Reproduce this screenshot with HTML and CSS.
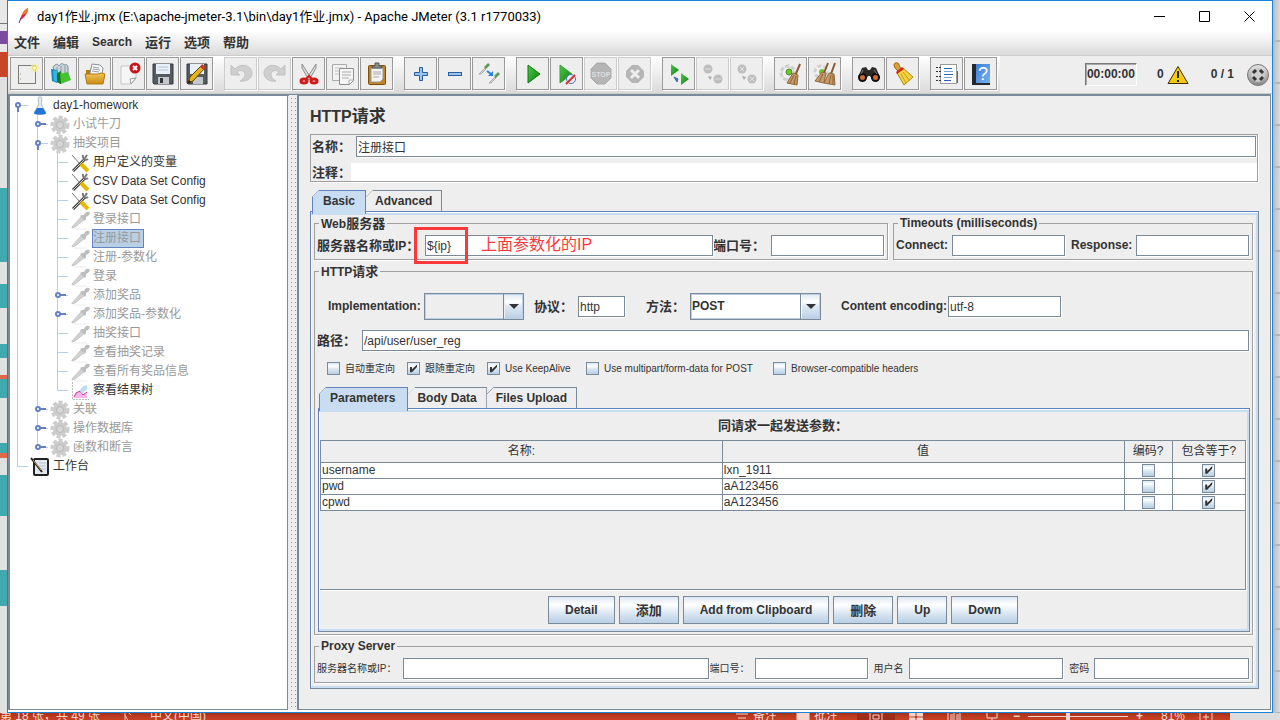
FILE: index.html
```html
<!DOCTYPE html>
<html lang="zh-CN">
    <head>
        <meta charset="UTF-8">
        <meta name="viewport" content="width=device-width, initial-scale=1.0"/>
        <title>day1作业.jmx - Apache JMeter</title>
        <link rel="stylesheet" href="styles.css">
    </head>
    <body>
        <!-- icon sprite -->
        <svg class="sprite">
            <defs>
                <linearGradient id="green" x1="0" y1="0" x2="1" y2="1">
                    <stop offset="0" stop-color="#4fc94a"/><stop offset="1" stop-color="#087d08"/>
                </linearGradient>
                <linearGradient id="gold" x1="0" y1="0" x2="0" y2="1">
                    <stop offset="0" stop-color="#f3c65c"/><stop offset="1" stop-color="#c98a12"/>
                </linearGradient>
                <linearGradient id="book" x1="0" y1="0" x2="1" y2="1">
                    <stop offset="0" stop-color="#3c7fd6"/><stop offset="1" stop-color="#7ab2f2"/>
                </linearGradient>
                <linearGradient id="steel" x1="0" y1="0" x2="0" y2="1">
                    <stop offset="0" stop-color="#e6e6e6"/><stop offset="1" stop-color="#888"/>
                </linearGradient>
            </defs>
            <symbol id="i-feather" viewBox="0 0 12 18">
                <path d="M11 1C7 3 4 8 3 13l2-1C9 9 11 5 11 1z" fill="#d6274b"/>
                <path d="M11 1C8 2 6 5 5 8l4-1c2-2 2-4 2-6z" fill="#ee7a26"/>
                <path d="M4 11l-2 5" stroke="#6b2c6b" fill="none"/>
            </symbol>
            <symbol id="i-new" viewBox="0 0 24 24">
                <rect x="3.500" y="3.500" width="17" height="18" fill="#eee" stroke="#7b7b74"/>
                <path d="M5 12h1M5 17h1" stroke="#999"/>
                <circle cx="19.500" cy="6" r="4" fill="#f6efa0" opacity=".7"/>
                <circle cx="19.500" cy="6" r="2" fill="#fffbe0" stroke="#e3d64e"/>
            </symbol>
            <symbol id="i-templates" viewBox="0 0 24 24">
                <path d="M4 5c3-4 5-3 6-1 2-3 4-3 5-1 2-1 4 0 4 2v8H6z" fill="#c9d3dc" stroke="#7e8b96"/>
                <path d="M8 5v7M12 4v8M16 4v8" stroke="#8a98a5"/>
                <path d="M2 7l6 1v13l-5-2z" fill="#1787c2"/>
                <path d="M4 9l5-1v12l-4-1z" fill="#37b4e6"/>
                <path d="M8 11l4-2v13l-4-2z" fill="#1c8a1c"/>
                <path d="M11 12l8-2 3 8-10 4z" fill="#46c332"/>
                <path d="M8 11l3 1 1 10-4-2z" fill="#177a17"/>
            </symbol>
            <symbol id="i-open" viewBox="0 0 24 24">
                <path d="M3 8h4l1-2h10l1 4v10H3z" fill="#b57a17"/>
                <path d="M7 11l2-9 8 1 3 3-1 7H7z" fill="#f7f7f7" stroke="#8d9195"/>
                <path d="M10 5l6 1M10 7l7 1M9 9l7 1" stroke="#9aa0a6"/>
                <path d="M2 12h13l3-1 4 1-2 10H4z" fill="url(#gold)" stroke="#b27a14"/>
            </symbol>
            <symbol id="i-close" viewBox="0 0 24 24">
                <path d="M4 4h15v12l-5 6H4z" fill="#f6f6f6" stroke="#c5c5c5"/>
                <path d="M19 16l-5 6-1-5z" fill="#fff" stroke="#999"/>
                <circle cx="18" cy="6" r="5.500" fill="#c5161d"/>
                <path d="M16 4l4 4M20 4l-4 4" stroke="#fff" stroke-width="2"/>
            </symbol>
            <symbol id="i-save" viewBox="0 0 24 24">
                <path d="M2 2h20v20H3l-1-1z" fill="#555b61" stroke="#33373b"/>
                <rect x="5" y="2" width="14" height="10" fill="#e9f1f8"/>
                <path d="M7 5h10M7 8h10" stroke="#b2c6d8"/>
                <rect x="7" y="15" width="11" height="7" fill="#c4c8cc"/>
                <rect x="9" y="16" width="3" height="5" fill="#33373b"/>
            </symbol>
            <symbol id="i-saveas" viewBox="0 0 24 24">
                <path d="M2 2h20v20H3l-1-1z" fill="#555b61" stroke="#33373b"/>
                <rect x="5" y="2" width="14" height="10" fill="#e9f1f8"/>
                <rect x="8" y="15" width="10" height="7" fill="#c4c8cc"/>
                <path d="M3 21l2-6L16 4l3 3L8 19z" fill="#e8b21c" stroke="#5c4306"/>
                <path d="M15 5l2-3 4 3-2 3z" fill="#c6382a"/>
                <path d="M3 21l1-3 2 2z" fill="#111"/>
            </symbol>
            <symbol id="i-undo" viewBox="0 0 24 24">
                <path d="M2 3v10h9L8 10c4-3 8-1 8 3 0 3-3 5-5 6 6 1 12-2 12-8C23 4 13 0 6 7z" fill="#cfcfcf" stroke="#c2c2c2"/>
            </symbol>
            <symbol id="i-cut" viewBox="0 0 24 24">
                <path d="M5 2l9 14-2 2L5 6zM19 2l-9 14 2 2 7-12z" fill="#dcdcdc" stroke="#8c8c8c"/>
                <ellipse cx="7" cy="19" rx="3" ry="2" fill="none" stroke="#d11a1a" stroke-width="3"/>
                <ellipse cx="17" cy="19" rx="3" ry="2" fill="none" stroke="#d11a1a" stroke-width="3"/>
                <path d="M9 17l3-3 3 3" fill="none" stroke="#d11a1a" stroke-width="2"/>
            </symbol>
            <symbol id="i-copy" viewBox="0 0 24 24">
                <path d="M1.500 2.500h14v16h-14z" fill="#f2f2f2" stroke="#aaa"/>
                <path d="M4 6h8M4 9h4M4 12h4" stroke="#c4c4c4"/>
                <path d="M8.500 6.500h14v12l-4 4h-10z" fill="#f5f5f5" stroke="#8e8e8e"/>
                <path d="M11 10h9M11 13h9M11 16h7M22 18h-4v4" stroke="#aaa" fill="none"/>
            </symbol>
            <symbol id="i-paste" viewBox="0 0 24 24">
                <rect x="3.500" y="3.500" width="17" height="19" rx="1" fill="#c28226" stroke="#7e4f0b"/>
                <path d="M6 6h12v11l-3 3H6z" fill="#f4f4f4" stroke="#999"/>
                <path d="M8 10h8M8 12h8M8 15h6" stroke="#aaa"/>
                <path d="M7 6V4h3V1h4v3h3v2z" fill="#8c8f88" stroke="#55574f"/>
            </symbol>
            <symbol id="i-plus" viewBox="0 0 24 24">
                <path d="M10.500 5.500h3v5h5v3h-5v5h-3v-5h-5v-3h5z" fill="#9cc4ea" stroke="#2a5f9e"/>
            </symbol>
            <symbol id="i-minus" viewBox="0 0 24 24">
                <rect x="5.500" y="10.500" width="13" height="3" fill="#9cc4ea" stroke="#2a5f9e"/>
            </symbol>
            <symbol id="i-toggle" viewBox="0 0 24 24">
                <path d="M2 12l6-6 1 1-5 5z" fill="#ddd" stroke="#aaa"/>
                <path d="M7 5l4-4 2 2-4 4z" fill="#5d9a5a"/>
                <path d="M10 9l4 3" stroke="#2b7fe8" stroke-width="2"/>
                <path d="M16 9v5h-5z" fill="#2b7fe8"/>
                <path d="M12 21l6-6 1 1-5 5z" fill="#ddd" stroke="#aaa"/>
                <path d="M17 14l4-4 2 2-4 4z" fill="#5d9a5a"/>
            </symbol>
            <symbol id="i-run" viewBox="0 0 24 24">
                <path d="M7 3l12 9-12 9z" fill="url(#green)" stroke="#0b7a12"/>
            </symbol>
            <symbol id="i-run-notimer" viewBox="0 0 24 24">
                <path d="M5 3l12 9-12 9z" fill="url(#green)" stroke="#3d9c3d"/>
                <circle cx="16" cy="17" r="4.500" fill="#e8eef7" stroke="#4b74b5"/>
                <path d="M11 22l9-9" stroke="#d9312b" stroke-width="2"/>
            </symbol>
            <symbol id="i-shutdown" viewBox="0 0 24 24">
                <path d="M9 3h6l6 6v6l-6 6H9l-6-6V9z" fill="#b5b5b5"/>
                <path d="M8 8l8 8M16 8l-8 8" stroke="#eee" stroke-width="3"/>
            </symbol>
            <symbol id="i-remote" viewBox="0 0 24 24">
                <path d="M4 2l8 6-8 6z" fill="url(#green)"/>
                <path d="M14 11l8 6-8 6z" fill="url(#green)"/>
                <path d="M7 15l4 2-1 3z" fill="#3f6fb5" stroke="#3f6fb5"/>
            </symbol>
            <symbol id="i-remote-stop" viewBox="0 0 24 24">
                <circle cx="7" cy="7" r="4.500" fill="#bebebe"/>
                <circle cx="17" cy="17" r="4.500" fill="#bebebe"/>
                <path d="M4 7h6M14 17h6" stroke="#ddd"/>
                <path d="M7 14l4 1-2 3z" fill="#aaa"/>
            </symbol>
            <symbol id="i-remote-shut" viewBox="0 0 24 24">
                <circle cx="7" cy="7" r="4.500" fill="#bebebe"/>
                <circle cx="17" cy="17" r="4.500" fill="#bebebe"/>
                <path d="M5 5l4 4M9 5l-4 4M15 15l4 4M19 15l-4 4" stroke="#e4e4e4"/>
                <path d="M7 14l4 1-2 3z" fill="#aaa"/>
            </symbol>
            <symbol id="i-clear" viewBox="0 0 24 24">
                <circle cx="9" cy="11" r="7" fill="#eee" stroke="#d0d0d0" stroke-width="3" stroke-dasharray="4 2"/>
                <circle cx="9" cy="11" r="6" fill="#f2f2f2" stroke="#ccc"/>
                <circle cx="10" cy="10" r="3" fill="#6fc52f" stroke="#4c8d1f"/>
                <path d="M21 2l-5 12" stroke="#8a5a32" stroke-width="2"/>
                <path d="M14 11l5 2-1 10-10-2z" fill="#c69a6a" stroke="#936638"/>
                <path d="M15 13l-4 8M17 14l-2 8" stroke="#8a6137"/>
            </symbol>
            <symbol id="i-clear-all" viewBox="0 0 24 24">
                <circle cx="8" cy="10" r="6" fill="#f2f2f2" stroke="#d0d0d0" stroke-width="3" stroke-dasharray="4 2"/>
                <circle cx="9" cy="10" r="3" fill="#6fc52f"/>
                <path d="M15 1l-4 10M22 1l-4 11" stroke="#8a5a32" stroke-width="2"/>
                <path d="M9 10l4 1-2 10-9-2zM16 11l5 1 1 11-11-2z" fill="#c69a6a" stroke="#936638"/>
                <path d="M10 12l-4 8M18 13l-2 9M20 13v9" stroke="#8a6137"/>
            </symbol>
            <symbol id="i-search" viewBox="0 0 24 24">
                <path d="M5 6l4-1 2 3h2l2-3 4 1 4 9-2 4h-5l-3-5h-2l-3 5H3l-2-4z" fill="#2c2926"/>
                <circle cx="5.500" cy="15.500" r="3.500" fill="#c76c3a" stroke="#111" stroke-width="2"/>
                <circle cx="18.500" cy="15.500" r="3.500" fill="#c76c3a" stroke="#111" stroke-width="2"/>
                <path d="M6 8l-2 4M17 8l3 4" stroke="#777"/>
            </symbol>
            <symbol id="i-broom" viewBox="0 0 24 24">
                <path d="M3 3c0-3 5-3 5 0l2 4-3 2-3-3z" fill="#dba23b" stroke="#9c6a12"/>
                <path d="M6 11l6-5 10 9-9 8z" fill="#f2d13c" stroke="#b48b12"/>
                <path d="M10 12l5 9M12 10l7 9" stroke="#c6a024"/>
                <path d="M5 10l6-5 2 2-7 5z" fill="#cf2b1d"/>
            </symbol>
            <symbol id="i-function" viewBox="0 0 24 24">
                <rect x="21" y="9" width="2" height="6" fill="#1d6fe0"/><rect x="21" y="15" width="2" height="6" fill="#2a9a2a"/>
                <rect x="5.500" y="2.500" width="16" height="19" fill="#fff" stroke="#999"/>
                <path d="M1 5.500h6M1 9.500h6M1 14.500h6M1 18.500h6" stroke="#333" stroke-dasharray="2 1"/>
                <path d="M9 6.500h8M9 12.500h9M9 18.500h7" stroke="#2a62c4"/>
                <path d="M9 9.500h9M9 15.500h8" stroke="#7da3dd"/>
            </symbol>
            <symbol id="i-warning" viewBox="0 0 22 20">
                <path d="M11 1.500L21 18.500H1z" fill="#f7ca12" stroke="#3a3000" stroke-linejoin="round"/>
                <path d="M11 6v7M11 15v2" stroke="#222" stroke-width="2"/>
            </symbol>
            <symbol id="i-status" viewBox="0 0 24 24">
                <circle cx="12" cy="12" r="10.500" fill="url(#steel)" stroke="#777"/>
                <circle cx="12" cy="12" r="7" fill="#ccc"/>
                <path d="M7 10l3-3M14 7l3 3M17 14l-3 3M10 17l-3-3" stroke="#333" stroke-width="3"/>
            </symbol>
            <symbol id="i-flask" viewBox="0 0 20 20">
                <path d="M8.500 1v8L4 17c0 2 12 2 12 0l-4.500-8V1z" fill="#e4ebf2" stroke="#b5bfca"/>
                <path d="M7 12l-3 5c0 2 12 2 12 0l-3-5z" fill="#1f75d8"/>
            </symbol>
            <symbol id="i-gear" viewBox="0 0 20 20">
                <circle cx="10" cy="10" r="8" fill="none" stroke="#ccc" stroke-width="3" stroke-dasharray="4 2"/>
                <circle cx="10" cy="10" r="5" fill="#ddd" stroke="#ccc" stroke-width="4"/>
                <circle cx="10" cy="10" r="3.500" fill="#d6d6d6" stroke="#b8b8b8"/>
            </symbol>
            <symbol id="i-pipette" viewBox="0 0 20 20">
                <path d="M2 17L12 6l3 3L5 17l-3 1z" fill="#d2d2d2" stroke="#c4c4c4"/>
                <path d="M10 6l2-1 2 0c1-3 3-4 5-3s0 4-3 5l0 2-1 2z" fill="#bdbdbd"/>
                <path d="M4 19h13" stroke="#ececec"/>
            </symbol>
            <symbol id="i-tools" viewBox="0 0 20 20">
                <path d="M2 2l8 9" stroke="#777" stroke-width="1"/>
                <path d="M3 18L15 6" stroke="#444" stroke-width="3"/>
                <path d="M3 18L15 6" stroke="#ccc" stroke-width="1"/>
                <path d="M13 2c-1 3 2 6 5 4M17 2l-2 3" stroke="#777" stroke-width="2" fill="none"/>
                <path d="M11 11l7 7" stroke="#e9b800" stroke-width="4"/>
            </symbol>
            <symbol id="i-chart" viewBox="0 0 20 20">
                <path d="M2.500 1v17.500H19" stroke="#bbb" fill="none" stroke-dasharray="2 1"/>
                <path d="M4 17l2-5 4-2 3 4 4-3v6z" fill="#f8b6ec"/>
                <path d="M4 16l2-4 4-2 3 4 4-3" stroke="#c2368f" fill="none"/>
                <path d="M10 10c1-4 3-5 7-6v5c-4 0-3 4-5 4z" fill="#bcdcf8"/>
            </symbol>
            <symbol id="i-bench" viewBox="0 0 20 20">
                <rect x="4" y="2" width="14" height="16" rx="1" fill="#e3e8ee" stroke="#222" stroke-width="2"/>
                <path d="M9 6h7M9 9h7M9 12h7" stroke="#b5c2d2"/>
                <path d="M1 1l11 14" stroke="#222" stroke-width="2"/>
                <path d="M3 3l8 10" stroke="#b8964c"/>
            </symbol>
            <symbol id="i-closed" viewBox="0 0 12 12">
                <path d="M5 5h6" stroke="#6382bf" stroke-width="2"/>
                <circle cx="3" cy="5" r="2" fill="#fff" stroke="#6382bf" stroke-width="2"/>
            </symbol>
            <symbol id="i-opened" viewBox="0 0 12 12">
                <path d="M3 6v6" stroke="#6382bf" stroke-width="2"/>
                <circle cx="3" cy="5" r="2" fill="#fff" stroke="#6382bf" stroke-width="2"/>
            </symbol>
        </svg>

        <div class="desktop">
            <div class="strip strip-left"></div>

            <div class="window">
                <header class="titlebar">
                    <svg class="app-icon"><use href="#i-feather"/></svg>
                    <span class="title">day1作业.jmx (E:\apache-jmeter-3.1\bin\day1作业.jmx) - Apache JMeter (3.1 r1770033)</span>
                    <button class="win-button" aria-label="Minimize"><svg viewBox="0 0 11 11"><path d="M0 5.500h11"/></svg></button>
                    <button class="win-button" aria-label="Maximize"><svg viewBox="0 0 11 11"><path d="M.5.5h10v10H.5z"/></svg></button>
                    <button class="win-button" aria-label="Close"><svg viewBox="0 0 11 11"><path d="M.5.5l10 10M10.500.5l-10 10"/></svg></button>
                </header>

                <nav class="menubar">
                    <button>文件</button>
                    <button>编辑</button>
                    <button class="latin">Search</button>
                    <button>运行</button>
                    <button>选项</button>
                    <button>帮助</button>
                </nav>

                <div class="toolbar">
                    <div class="tools">
                        <div class="group">
                            <button aria-label="新建"><svg><use href="#i-new"/></svg></button>
                            <button aria-label="模板"><svg><use href="#i-templates"/></svg></button>
                            <button aria-label="打开"><svg><use href="#i-open"/></svg></button>
                            <button aria-label="关闭"><svg><use href="#i-close"/></svg></button>
                            <button aria-label="保存"><svg><use href="#i-save"/></svg></button>
                            <button aria-label="另存为"><svg><use href="#i-saveas"/></svg></button>
                        </div>
                        <div class="group">
                            <button aria-label="撤销" disabled><svg><use href="#i-undo"/></svg></button>
                            <button aria-label="重做" disabled><svg class="mirrored"><use href="#i-undo"/></svg></button>
                            <button aria-label="剪切"><svg><use href="#i-cut"/></svg></button>
                            <button aria-label="复制"><svg><use href="#i-copy"/></svg></button>
                            <button aria-label="粘贴"><svg><use href="#i-paste"/></svg></button>
                        </div>
                        <div class="group">
                            <button aria-label="展开"><svg><use href="#i-plus"/></svg></button>
                            <button aria-label="折叠"><svg><use href="#i-minus"/></svg></button>
                            <button aria-label="切换"><svg><use href="#i-toggle"/></svg></button>
                        </div>
                        <div class="group">
                            <button aria-label="启动"><svg><use href="#i-run"/></svg></button>
                            <button aria-label="不停顿启动"><svg><use href="#i-run-notimer"/></svg></button>
                            <button aria-label="停止" disabled>
                                <svg viewBox="0 0 24 24">
                                    <path d="M8 1h8l6 6v9l-6 6H8l-6-6V7z" fill="#b5b5b5" stroke="#aaa"/>
                                    <text x="12" y="15" text-anchor="middle" font-size="7" font-weight="bold" fill="#dedede">STOP</text>
                                </svg>
                            </button>
                            <button aria-label="关闭线程" disabled><svg><use href="#i-shutdown"/></svg></button>
                        </div>
                        <div class="group">
                            <button aria-label="远程启动"><svg><use href="#i-remote"/></svg></button>
                            <button aria-label="远程停止" disabled><svg><use href="#i-remote-stop"/></svg></button>
                            <button aria-label="远程关闭" disabled><svg><use href="#i-remote-shut"/></svg></button>
                        </div>
                        <div class="group">
                            <button aria-label="清除"><svg><use href="#i-clear"/></svg></button>
                            <button aria-label="清除全部"><svg><use href="#i-clear-all"/></svg></button>
                        </div>
                        <div class="group">
                            <button aria-label="查找"><svg><use href="#i-search"/></svg></button>
                            <button aria-label="重置查找"><svg><use href="#i-broom"/></svg></button>
                        </div>
                        <div class="group">
                            <button aria-label="函数助手"><svg><use href="#i-function"/></svg></button>
                            <button aria-label="帮助">
                                <svg viewBox="0 0 24 24">
                                    <rect x="3" y="2" width="18" height="21" fill="#23272e"/>
                                    <rect x="7" y="2" width="14" height="19" fill="url(#book)"/>
                                    <text x="14" y="18" text-anchor="middle" font-size="18" fill="#fff">?</text>
                                </svg>
                            </button>
                        </div>
                    </div>
                    <div class="status">
                        <span class="timer">00:00:00</span>
                        <span class="errors">0</span>
                        <svg class="warning"><use href="#i-warning"/></svg>
                        <span class="threads">0 / 1</span>
                        <svg class="indicator"><use href="#i-status"/></svg>
                    </div>
                </div>

                <div class="workspace">
                    <aside class="tree">
                        <ul>
                            <li>
                                <div class="node"><button class="handle" aria-label="折叠"><svg><use href="#i-opened"/></svg></button><svg class="icon"><use href="#i-flask"/></svg><span class="name">day1-homework</span></div>
                                <ul>
                                    <li><div class="node off"><button class="handle" aria-label="展开"><svg><use href="#i-closed"/></svg></button><svg class="icon"><use href="#i-gear"/></svg><span class="name">小试牛刀</span></div></li>
                                    <li>
                                        <div class="node off"><button class="handle" aria-label="折叠"><svg><use href="#i-opened"/></svg></button><svg class="icon"><use href="#i-gear"/></svg><span class="name">抽奖项目</span></div>
                                        <ul>
                                            <li><div class="node"><span class="handle"></span><svg class="icon"><use href="#i-tools"/></svg><span class="name">用户定义的变量</span></div></li>
                                            <li><div class="node"><span class="handle"></span><svg class="icon"><use href="#i-tools"/></svg><span class="name">CSV Data Set Config</span></div></li>
                                            <li><div class="node"><span class="handle"></span><svg class="icon"><use href="#i-tools"/></svg><span class="name">CSV Data Set Config</span></div></li>
                                            <li><div class="node off"><span class="handle"></span><svg class="icon"><use href="#i-pipette"/></svg><span class="name">登录接口</span></div></li>
                                            <li><div class="node off"><span class="handle"></span><svg class="icon"><use href="#i-pipette"/></svg><span class="name selected">注册接口</span></div></li>
                                            <li><div class="node off"><span class="handle"></span><svg class="icon"><use href="#i-pipette"/></svg><span class="name">注册-参数化</span></div></li>
                                            <li><div class="node off"><span class="handle"></span><svg class="icon"><use href="#i-pipette"/></svg><span class="name">登录</span></div></li>
                                            <li><div class="node off"><button class="handle" aria-label="展开"><svg><use href="#i-closed"/></svg></button><svg class="icon"><use href="#i-pipette"/></svg><span class="name">添加奖品</span></div></li>
                                            <li><div class="node off"><button class="handle" aria-label="展开"><svg><use href="#i-closed"/></svg></button><svg class="icon"><use href="#i-pipette"/></svg><span class="name">添加奖品-参数化</span></div></li>
                                            <li><div class="node off"><span class="handle"></span><svg class="icon"><use href="#i-pipette"/></svg><span class="name">抽奖接口</span></div></li>
                                            <li><div class="node off"><span class="handle"></span><svg class="icon"><use href="#i-pipette"/></svg><span class="name">查看抽奖记录</span></div></li>
                                            <li><div class="node off"><span class="handle"></span><svg class="icon"><use href="#i-pipette"/></svg><span class="name">查看所有奖品信息</span></div></li>
                                            <li><div class="node"><span class="handle"></span><svg class="icon"><use href="#i-chart"/></svg><span class="name">察看结果树</span></div></li>
                                        </ul>
                                    </li>
                                    <li><div class="node off"><button class="handle" aria-label="展开"><svg><use href="#i-closed"/></svg></button><svg class="icon"><use href="#i-gear"/></svg><span class="name">关联</span></div></li>
                                    <li><div class="node off"><button class="handle" aria-label="展开"><svg><use href="#i-closed"/></svg></button><svg class="icon"><use href="#i-gear"/></svg><span class="name">操作数据库</span></div></li>
                                    <li><div class="node off"><button class="handle" aria-label="展开"><svg><use href="#i-closed"/></svg></button><svg class="icon"><use href="#i-gear"/></svg><span class="name">函数和断言</span></div></li>
                                </ul>
                            </li>
                            <li><div class="node"><span class="handle"></span><svg class="icon"><use href="#i-bench"/></svg><span class="name">工作台</span></div></li>
                        </ul>
                    </aside>

                    <div class="divider"></div>

                    <main class="editor">
                        <h1>HTTP<span class="cjk">请求</span></h1>

                        <div class="naming">
                            <div class="naming-row">
                                <label for="name">名称：</label>
                                <input type="text" id="name" value="注册接口">
                            </div>
                            <div class="naming-row">
                                <label for="comment">注释：</label>
                                <input type="text" id="comment" class="plain">
                            </div>
                        </div>

                        <div class="tabs">
                            <button class="tab active">Basic</button>
                            <button class="tab">Advanced</button>
                        </div>
                        <section class="panel request">
                            <div class="servers">
                                <fieldset class="web">
                                    <legend>Web<span class="cjk">服务器</span></legend>
                                    <div class="fields">
                                        <label for="server" class="server-label"><span class="cjk">服务器名称或</span>IP<span class="cjk">：</span></label>
                                        <div class="server-field">
                                            <input type="text" id="server" value="${ip}">
                                            <span class="mark"></span>
                                            <span class="note">上面参数化的IP</span>
                                        </div>
                                        <label for="port" class="port-label cjk">端口号：</label>
                                        <input type="text" id="port" class="short">
                                    </div>
                                </fieldset>
                                <fieldset class="timeouts">
                                    <legend>Timeouts (milliseconds)</legend>
                                    <div class="fields">
                                        <label for="connect">Connect:</label>
                                        <input type="text" id="connect" class="short">
                                        <label for="response">Response:</label>
                                        <input type="text" id="response" class="short">
                                    </div>
                                </fieldset>
                            </div>

                            <fieldset class="http">
                                <legend>HTTP<span class="cjk">请求</span></legend>
                                <div class="options">
                                    <label for="implementation" class="implementation-label">Implementation:</label>
                                    <span class="combo implementation"><select id="implementation"><option></option></select></span>
                                    <label for="protocol" class="protocol-label cjk">协议：</label>
                                    <input type="text" id="protocol" class="protocol" value="http">
                                    <label for="method" class="method-label cjk">方法：</label>
                                    <span class="combo method"><select id="method"><option>POST</option><option>GET</option></select></span>
                                    <label for="encoding" class="encoding-label">Content encoding:</label>
                                    <input type="text" id="encoding" class="short" value="utf-8">
                                </div>
                                <div class="fields path">
                                    <label for="path" class="cjk">路径：</label>
                                    <input type="text" id="path" value="/api/user/user_reg">
                                </div>
                                <div class="checks">
                                    <label><input type="checkbox">自动重定向</label>
                                    <label><input type="checkbox" checked>跟随重定向</label>
                                    <label><input type="checkbox" checked>Use KeepAlive</label>
                                    <label><input type="checkbox">Use multipart/form-data for POST</label>
                                    <label><input type="checkbox">Browser-compatible headers</label>
                                </div>

                                <div class="tabs">
                                    <button class="tab active">Parameters</button>
                                    <button class="tab">Body Data</button>
                                    <button class="tab">Files Upload</button>
                                </div>
                                <section class="panel parameters">
                                    <h2>同请求一起发送参数：</h2>
                                    <div class="scroll">
                                        <table>
                                            <thead>
                                                <tr><th>名称:</th><th>值</th><th class="encode">编码?</th><th class="equals">包含等于?</th></tr>
                                            </thead>
                                            <tbody>
                                                <tr><td>username</td><td>lxn_1911</td><td><input type="checkbox" aria-label="编码"></td><td><input type="checkbox" aria-label="包含等于" checked></td></tr>
                                                <tr><td>pwd</td><td>aA123456</td><td><input type="checkbox" aria-label="编码"></td><td><input type="checkbox" aria-label="包含等于" checked></td></tr>
                                                <tr><td>cpwd</td><td>aA123456</td><td><input type="checkbox" aria-label="编码"></td><td><input type="checkbox" aria-label="包含等于" checked></td></tr>
                                            </tbody>
                                        </table>
                                    </div>
                                    <div class="actions">
                                        <button>Detail</button>
                                        <button class="cjk">添加</button>
                                        <button>Add from Clipboard</button>
                                        <button class="cjk">删除</button>
                                        <button>Up</button>
                                        <button>Down</button>
                                    </div>
                                </section>
                            </fieldset>

                            <fieldset class="proxy">
                                <legend>Proxy Server</legend>
                                <div class="fields">
                                    <label for="proxy-server" class="proxy-server-label">服务器名称或IP：</label>
                                    <input type="text" id="proxy-server" class="proxy-server">
                                    <label for="proxy-port" class="proxy-port-label">端口号：</label>
                                    <input type="text" id="proxy-port" class="short">
                                    <label for="proxy-user" class="proxy-user-label">用户名</label>
                                    <input type="text" id="proxy-user" class="credential">
                                    <label for="proxy-pass" class="proxy-pass-label">密码</label>
                                    <input type="text" id="proxy-pass" class="credential">
                                </div>
                            </fieldset>
                        </section>
                    </main>
                </div>
            </div>

            <div class="strip strip-right"></div>
        </div>

        <footer class="slides">
            <div class="slides-info">
                <span>第 18 张，共 49 张</span>
                <svg viewBox="0 0 16 12"><path d="M2 1h6v10M8 4l4 7M12 1l3 3"/></svg>
                <span>中文(中国)</span>
            </div>
            <div class="slides-view">
                <svg viewBox="0 0 12 12"><path d="M0 3h12M2 7h8M0 11h12"/></svg>
                <span>备注</span>
                <svg class="comment" viewBox="0 0 12 12"><path class="solid" d="M0 1h12v8H6l-3 3V9H0z"/></svg>
                <span>批注</span>
                <i class="current"><svg viewBox="0 0 14 12"><path d="M1 1h12v10H1zM4 4h6v4H4z"/></svg></i>
                <svg viewBox="0 0 14 12"><path class="solid" d="M0 1h6v4H0zM8 1h6v4H8zM0 7h6v4H0zM8 7h6v4H8z"/></svg>
                <svg viewBox="0 0 14 12"><path d="M1 1h5l1 1 1-1h5v10H1zM7 2v9M3 4h3M3 6h3M3 8h3M9 4h3M9 6h3M9 8h3"/></svg>
                <svg viewBox="0 0 12 12"><path d="M1 1h10v6H1zM6 7v4M3 11h6"/></svg>
            </div>
            <div class="slides-zoom">
                <b>−</b>
                <input type="range" aria-label="缩放" value="40">
                <b>+</b>
                <span>81%</span>
                <svg viewBox="0 0 14 12"><path d="M1 1h12v10H1zM7 3v6M4 6h6"/></svg>
            </div>
        </footer>
    </body>
</html>
```

FILE: styles.css
```css
*
{
    box-sizing: border-box;
}

body
{
    display: grid;
    grid-template-rows: minmax(0, 1fr) 7px;
    height: 100vh;
    margin: 0;
    overflow: hidden;
    background: #ddd;
    color: #333;
    font: 12px/15px "Liberation Sans", "Noto Sans CJK SC", sans-serif;
}

button, input, select
{
    margin: 0;
    padding: 0;
    border: 0;
    background: none;
    color: inherit;
    font: inherit;
}

svg
{
    flex: none;
}

.sprite
{
    position: absolute;
    width: 0;
    height: 0;
}

.cjk
{
    font-size: 13px;
}

/* desktop behind the window */

.desktop
{
    display: grid;
    grid-template-columns: 7px minmax(0, 1fr) 7px;
    min-height: 0;
}

.strip-left
{
    background: linear-gradient(
        #e8e8e8 23px, #777 23px, #777 24px, #e8e8e8 24px, #e8e8e8 31px, #7b4ba0 31px, #7b4ba0 44px,
        #e8e8e8 44px, #e8e8e8 52px, #c8452a 52px, #c8452a 77px, #e0e0e0 77px, #e0e0e0 188px,
        #3fa9ae 188px, #3fa9ae 262px, #e0e0e0 262px, #e0e0e0 284px, #3fa9ae 284px, #3fa9ae 308px,
        #e0e0e0 308px, #e0e0e0 344px, #3fa9ae 344px, #3fa9ae 358px, #e0e0e0 358px, #e0e0e0 375px,
        #e0694c 375px, #e0694c 379px, #3fa9ae 379px, #3fa9ae 398px, #e0e0e0 398px, #e0e0e0 443px,
        #3fa9ae 443px, #3fa9ae 453px, #e0694c 453px, #e0694c 458px, #e0e0e0 458px, #e0e0e0 475px,
        #3fa9ae 475px, #3fa9ae 516px, #e0e0e0 516px, #e0e0e0 570px, #3fa9ae 570px, #3fa9ae 606px, #e0e0e0 606px);
}

.strip-right
{
    background: linear-gradient(90deg, #bbb, transparent), repeating-linear-gradient(#d5dbe3 0, #dedede 40px, #888 41px, #dedede 42px);
}

/* window frame */

.window
{
    display: flex;
    flex-direction: column;
    min-height: 0;
    border: 1px solid #1883d7;
    background: #fff;
}

.titlebar
{
    display: flex;
    align-items: center;
    height: 30px;
    padding-left: 9px;
    color: #000;
    font-family: Roboto, "Noto Sans CJK SC", sans-serif;
    font-size: 13px;
}

.app-icon
{
    width: 12px;
    height: 18px;
}

.title
{
    flex: 1;
    margin-left: 8px;
    white-space: nowrap;
}

.win-button
{
    display: grid;
    place-items: center;
    width: 45px;
    height: 30px;
}

.win-button svg
{
    width: 11px;
    height: 11px;
    fill: none;
    stroke: #000;
}

.menubar
{
    display: flex;
    gap: 13px;
    height: 25px;
    padding: 0 6px 2px;
    border-bottom: 1px solid #ccc;
    background: linear-gradient(#fff, #dadada);
    font-size: 13px;
    font-weight: bold;
}

.menubar .latin
{
    font-size: 12px;
}

/* toolbar */

.toolbar
{
    display: flex;
    justify-content: space-between;
    height: 38px;
    border-bottom: 1px solid #ccc;
    background: #eee;
}

.tools
{
    display: flex;
    gap: 11px;
    padding: 1px 3px 0 2px;
    background: linear-gradient(#fff, #dadada);
}

.group
{
    display: flex;
    gap: 1px;
}

.group button
{
    display: grid;
    place-items: center;
    width: 33px;
    height: 33px;
    border: 1px solid #999;
    background: #eee;
    box-shadow: 1px 1px 0 #fff;
}

.group button:disabled
{
    border-color: #ccc;
}

.group svg
{
    width: 24px;
    height: 24px;
}

.mirrored
{
    transform: scaleX(-1);
}

.status
{
    display: flex;
    align-items: center;
    padding-right: 2px;
    font-weight: bold;
}

.timer
{
    width: 52px;
    margin-right: 20px;
    padding: 3px 0;
    border: 1px solid;
    border-color: #777 #fff #fff #777;
    box-shadow: inset 1px 1px 0 #aaa;
    text-align: center;
}

.warning
{
    width: 22px;
    height: 20px;
    margin: 0 22px 0 3px;
}

.indicator
{
    width: 24px;
    height: 24px;
    margin-left: 12px;
}

/* workspace */

.workspace
{
    display: grid;
    flex: 1;
    grid-template-columns: 280px 9px minmax(0, 1fr);
    min-height: 0;
    padding: 0 1px 2px 0;
}

.tree
{
    overflow: hidden;
    border: solid #7a8a99;
    border-width: 2px 1px 1px 2px;
    background: #fff;
}

.divider
{
    padding: 0 1px 0 4px;
    border-top: 1px solid #7a8a99;
    background:
        conic-gradient(#9aa5b0 90deg, transparent 0) -1px 0 / 4px 4px content-box,
        conic-gradient(#9aa5b0 90deg, transparent 0) 1px 2px / 4px 4px content-box,
        #eee;
    background:
        linear-gradient(#8a97a4, #8a97a4) 0 0 / 1px 1px no-repeat,
        repeating-linear-gradient(#eee 0, #eee 3px, transparent 3px, transparent 4px),
        repeating-linear-gradient(90deg, #eee 0, #eee 3px, #8a97a4 3px, #8a97a4 4px);
}

.tree ul
{
    margin: 0;
    padding: 0;
    list-style: none;
}

.tree ul ul
{
    margin-left: 20px;
}

.tree li
{
    position: relative;
}

/* connector lines */
.tree li::before
{
    content: "";
    position: absolute;
    top: 0;
    bottom: 0;
    left: 7px;
    border-left: 1px solid #b8cfe5;
}

.tree li:last-child::before
{
    bottom: auto;
    height: 10px;
}

.tree > ul > li:first-child::before
{
    top: 10px;
}

.node
{
    display: flex;
    align-items: center;
    height: 19px;
    white-space: nowrap;
}

.handle
{
    position: relative;
    width: 20px;
    height: 19px;
    padding: 0 0 0 5px;
    background: linear-gradient(#b8cfe5, #b8cfe5) 8px 9px / 10px 1px no-repeat;
    text-align: left;
}

.handle svg
{
    display: block;
    width: 12px;
    height: 12px;
}

.icon
{
    width: 20px;
    height: 20px;
}

.name
{
    margin-left: 2px;
    padding-right: 2px;
    border: 1px solid transparent;
    line-height: 17px;
}

.off .name
{
    color: #999;
}

.off .selected
{
    border-color: #6382bf;
    background: #b8cfe5;
}

/* editor */

.editor
{
    display: flex;
    flex-direction: column;
    min-height: 0;
    padding: 9px 11px 20px 11px;
    border: solid #7a8a99;
    border-width: 2px 1px 1px 2px;
    background: #eee;
    white-space: nowrap;
}

h1
{
    margin: 0 0 5px;
    font-size: 16px;
    line-height: 24px;
}

h1 .cjk
{
    font-size: 17px;
}

h2
{
    margin: 0;
    font-size: 13px;
    line-height: 28px;
    text-align: center;
}

.editor input[type=text]
{
    min-width: 0;
    height: 21px;
    padding: 0 1px;
    border: 1px solid #7a8a99;
    background: #fff;
    box-shadow: 1px 1px 0 #fff;
}

.naming
{
    display: flex;
    flex-direction: column;
    gap: 6px;
    margin: 0 1px 8px 0;
    padding: 1px 0 0 1px;
    border: 1px solid #a0a0a0;
    box-shadow: 1px 1px 0 #fff;
}

.naming-row
{
    display: flex;
    align-items: center;
}

.naming label
{
    width: 39px;
    font-size: 13px;
    font-weight: bold;
}

.naming input
{
    flex: 1;
}

#name
{
    margin: 0 1px 0 5px;
}

.editor input.plain
{
    height: 18px;
    border: 0;
    box-shadow: none;
}

/* tabs */

.tabs
{
    display: flex;
    padding-left: 2px;
}

.tab
{
    height: 21px;
    padding: 0 9px;
    border: 1px solid #7a8a99;
    border-bottom: 0;
    border-left: 0;
    background: linear-gradient(135deg, transparent 4px, #7a8a99 4px, #7a8a99 5px, transparent 5px) border-box;
    clip-path: polygon(7px 0, 100% 0, 100% 100%, 0 100%, 0 7px);
    font-weight: bold;
}

.tab.active
{
    position: relative;
    height: 24px;
    margin-bottom: -3px;
    padding: 0 10px 3px;
    border-color: #6382bf;
    border-left: 1px solid #6382bf;
    background: linear-gradient(135deg, transparent 4px, #6382bf 4px, #6382bf 5px, #c8ddf2 5px) border-box;
}

.http .tab.active
{
    padding-right: 12px;
}

.panel
{
    display: flex;
    flex: 1;
    flex-direction: column;
    min-height: 0;
    border: 1px solid;
    border-color: #6382bf #7a8a99 #7a8a99 #6382bf;
    box-shadow: inset 0 1px 0 #fff, inset 0 3px 0 #c8ddf2, inset -2px -2px 0 #c8ddf2, inset 1px 0 0 #fff;
}

.request
{
    gap: 4px;
    padding: 4px 5px 5px 3px;
}

/* groups */

fieldset
{
    min-width: 0;
    margin: 0;
    padding: 4px 3px 3px 2px;
    border: 1px solid #a0a0a0;
    box-shadow: 1px 1px 0 #fff;
}

legend
{
    height: 15px;
    margin-left: 2px;
    padding: 0 2px;
    font-weight: bold;
}

.servers
{
    display: flex;
    gap: 5px;
}

.web
{
    flex: 1;
}

.fields, .options
{
    display: flex;
    align-items: center;
    font-weight: bold;
}

.editor input
{
    font-weight: normal;
}

.editor .short
{
    width: 113px;
}

.server-label
{
    width: 108px;
}

.server-field
{
    position: relative;
    display: flex;
    flex: 1;
}

.server-field input
{
    flex: 1;
}

/* highlighted value */
.mark
{
    position: absolute;
    top: -8px;
    left: -11px;
    width: 54px;
    height: 37px;
    border: 3px solid #fa3a3a;
}

.note
{
    position: absolute;
    top: 0;
    left: 56px;
    color: #fa3a3a;
    font-size: 16px;
    font-weight: normal;
    line-height: 20px;
}

.port-label
{
    width: 58px;
}

.timeouts label
{
    width: 56px;
}

.timeouts label + input + label
{
    width: 65px;
    margin-left: 6px;
}

.http
{
    display: flex;
    flex: 1;
    flex-direction: column;
    min-height: 0;
    padding-top: 14px;
    padding-bottom: 2px;
}

.implementation-label
{
    width: 96px;
    margin-left: 11px;
}

.protocol-label
{
    width: 44px;
    margin-left: 10px;
}

.method-label
{
    width: 44px;
    margin-left: 21px;
}

.encoding-label
{
    width: 107px;
    margin-left: 20px;
}

.editor .protocol
{
    width: 47px;
}

.combo
{
    position: relative;
    height: 27px;
    border: 1px solid #7a8a99;
}

.implementation
{
    width: 100px;
}

.method
{
    width: 131px;
    background: #fff;
}

.combo select
{
    width: 100%;
    height: 25px;
    padding: 0 20px 0 1px;
    appearance: none;
    background: linear-gradient(#dde8f3, #fff 30%, #dde8f3 50%, #b8cfe5) right / 18px 100% no-repeat;
    box-shadow: inset 0 0 0 1px #b8cfe5;
    font-weight: bold;
}

/* divider and arrow of the drop-down */
.combo::after
{
    content: "";
    position: absolute;
    top: 0;
    right: 0;
    width: 19px;
    height: 25px;
    border-left: 1px solid #7a8a99;
    pointer-events: none;
}

.combo::before
{
    content: "";
    position: absolute;
    top: 10px;
    right: 4px;
    border: 5px solid transparent;
    border-top-color: #333;
    border-bottom: 0;
    pointer-events: none;
}

.path
{
    margin-top: 10px;
}

.path label
{
    width: 45px;
}

.path input
{
    flex: 1;
}

.checks
{
    display: grid;
    grid-template-columns: 80px 80px 99px 187px auto;
    margin: 10px 0 11px;
    padding-left: 10px;
    font-size: 10px;
}

.checks label
{
    display: flex;
    gap: 5px;
    align-items: center;
}

input[type=checkbox]
{
    display: block;
    width: 13px;
    height: 13px;
    appearance: none;
    border: 1px solid #7a8a99;
    background: linear-gradient(#dde8f3, #fff 30%, #dde8f3 50%, #b8cfe5);
}

input[type=checkbox]:checked::before
{
    content: "";
    display: block;
    height: 11px;
    background: #333;
    clip-path: polygon(18% 36%, 36% 36%, 36% 60%, 82% 14%, 82% 36%, 36% 84%, 18% 84%);
}

/* parameters */

.parameters
{
    margin: 0 -1px 0 1px;
    padding: 3px 3px 7px 1px;
}

.scroll
{
    flex: 1;
    min-height: 0;
    margin-bottom: 6px;
    border: 1px solid #7a8a99;
    border-width: 1px 1px 1px 0;
    box-shadow: 1px 1px 0 #fff;
}

table
{
    width: 100%;
    border-collapse: collapse;
    table-layout: fixed;
}

th, td
{
    padding: 0 1px;
    border: 1px solid #7a8a99;
}

th
{
    height: 21px;
    border-top: 0;
    font-weight: normal;
}

th:last-child, td:last-child
{
    border-right: 0;
}

td
{
    height: 16px;
    background: #fff;
}

td input[type=checkbox]
{
    margin: 1px auto;
}

.encode
{
    width: 48px;
}

.equals
{
    width: 73px;
}

.actions
{
    display: flex;
    gap: 4px;
    justify-content: center;
}

.actions button
{
    height: 28px;
    padding: 0 16px;
    border: 1px solid #7a8a99;
    background: linear-gradient(#dde8f3, #fff 30%, #dde8f3 60%, #b8cfe5);
    font-weight: bold;
}

/* proxy */

.proxy label
{
    font-size: 10px;
    font-weight: normal;
}

.proxy-server-label
{
    width: 86px;
}

.proxy-server
{
    flex: 2;
}

.proxy-port-label
{
    width: 45px;
    margin-left: 1px;
}

.proxy-user-label
{
    width: 35px;
    margin-left: 6px;
}

.proxy-pass-label
{
    width: 25px;
    margin-left: 6px;
}

.credential
{
    flex: 1;
}

/* slide editor status bar */

.slides
{
    display: flex;
    justify-content: space-between;
    margin-right: 50px;
    overflow: hidden;
    background: linear-gradient(#a3321c, #c43e22 5px);
    color: #f4d6cf;
    line-height: 7px;
    white-space: nowrap;
}

.slides > div
{
    display: flex;
    align-items: center;
}

.slides-info
{
    flex: 1;
    gap: 18px;
}

.slides-view
{
    gap: 4px;
}

.slides svg
{
    width: 14px;
    height: 12px;
    fill: none;
    stroke: #f4d6cf;
}

.slides .solid
{
    fill: #f4d6cf;
}

.slides .comment
{
    margin-left: 15px;
}

.current
{
    display: flex;
    justify-content: center;
    width: 38px;
    margin-left: 15px;
    background: #9c2e19;
}

.slides-view .current ~ svg
{
    margin: 0 10px;
}

.slides-zoom
{
    gap: 8px;
    padding: 0 17px 0 4px;
}

.slides-zoom input
{
    width: 100px;
    height: 7px;
    appearance: none;
    background: linear-gradient(#f4d6cf, #f4d6cf) center / 100% 1px no-repeat;
}

.slides-zoom input::-webkit-slider-thumb
{
    width: 4px;
    height: 7px;
    appearance: none;
    background: #f4d6cf;
}

.slides-zoom span
{
    margin: 0 6px 0 10px;
}
```
